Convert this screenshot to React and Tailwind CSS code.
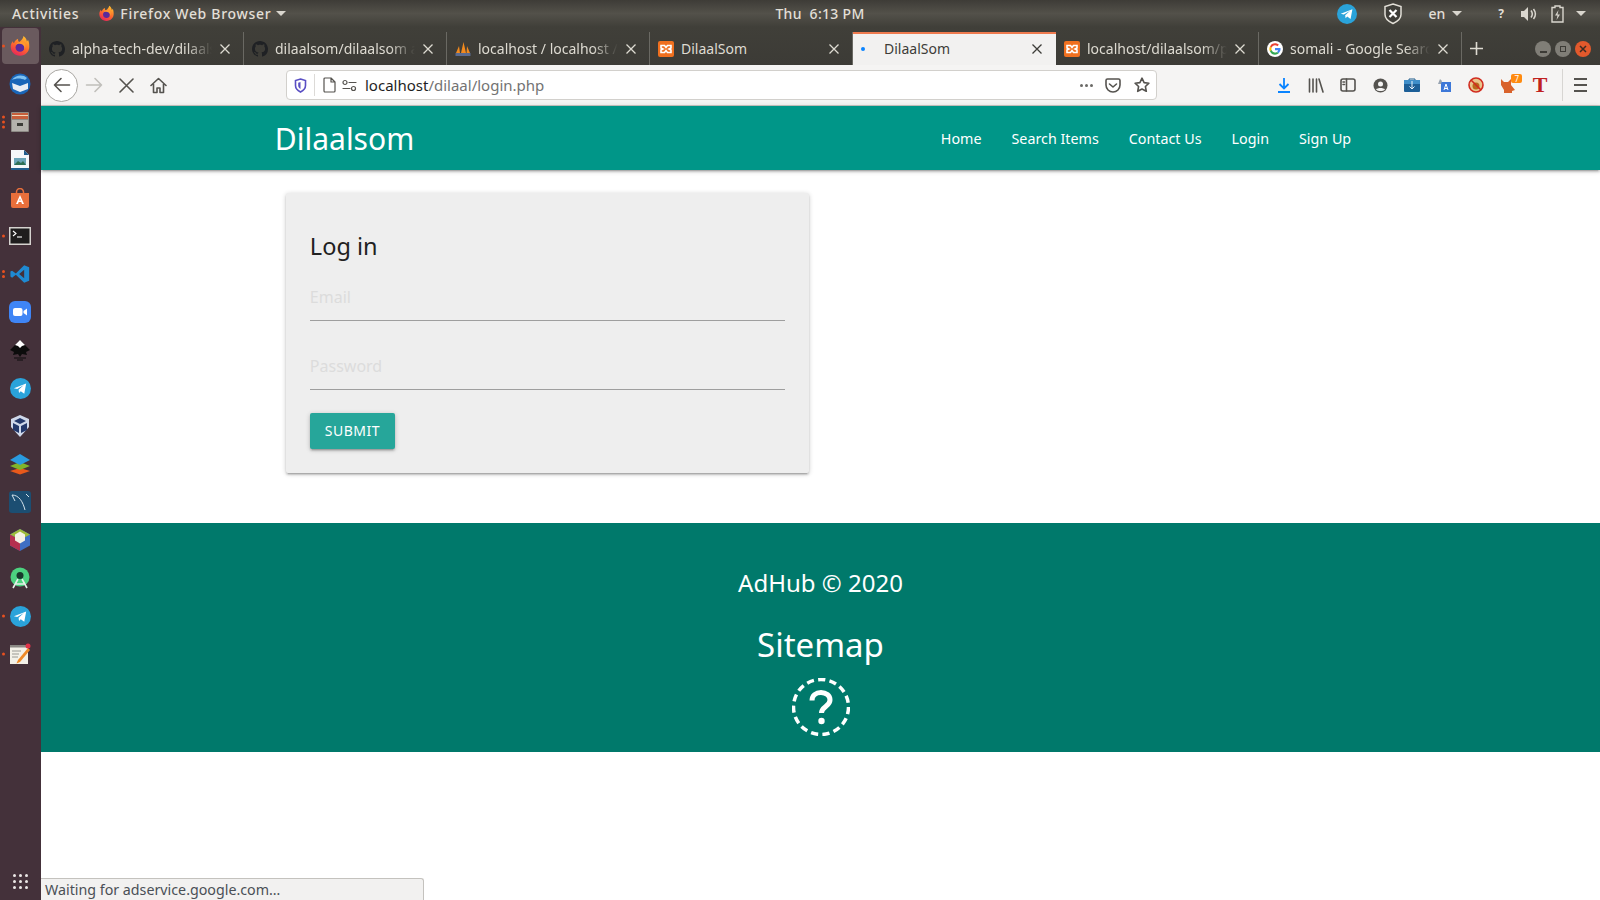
import React from "react";

const UI = { fontFamily: '"Noto Sans", "Open Sans", sans-serif' };

function Firefox({ s = 16 }) {
  return (
    <svg width={s} height={s} viewBox="0 0 32 32">
      <defs>
        <linearGradient id="ffg" x1="0.7" y1="0" x2="0.2" y2="1">
          <stop offset="0" stopColor="#ffbd2e" />
          <stop offset="0.5" stopColor="#ff6a2b" />
          <stop offset="1" stopColor="#e3205f" />
        </linearGradient>
      </defs>
      <path d="M16 30C8 30 2.500 24 2.500 17c0-3 1-6 3-8 .2 1.500.8 2.500 1.800 3 .8-3 3-5.500 6-6.500-.5 2 0 3.500 1.500 4.500C19 7 20.500 5 21 1.500c4 2.500 5 6 4.800 8 1-.5 1.500-1.300 1.800-2.500C29 9.500 29.500 13 29.500 17 29.500 24 24 30 16 30z" fill="url(#ffg)" />
      <circle cx="16" cy="18" r="6.500" fill="#5b2a9b" />
      <path d="M9 15c3-3 8-3 11-1 2 1.500 3 4 2 7 2-2 3-6 1-9-3-3-10-3-14 3z" fill="#ff9a2e" />
    </svg>
  );
}

function Telegram({ s = 20 }) {
  return (
    <svg width={s} height={s} viewBox="0 0 24 24">
      <circle cx="12" cy="12" r="12" fill="#2aa3da" />
      <path d="M4.500 11.800 18.500 6.300 16.300 18l-4-3-2 2-.5-3.600 6-5.400-7.600 4.700z" fill="#fff" />
    </svg>
  );
}

function Xampp({ s = 16 }) {
  return (
    <svg width={s} height={s} viewBox="0 0 16 16">
      <rect width="16" height="16" rx="2" fill="#f0701f" />
      <path d="M3 4.500h3.500L8 6.500l1.500-2H13v2.500l-2 1 2 1v2.500H9.500L8 9.500l-1.500 2H3V9l2-1-2-1z" fill="none" stroke="#fff" strokeWidth="1.600" />
    </svg>
  );
}

function Github() {
  return (
    <svg width="16" height="16" viewBox="0 0 16 16" fill="#1f2124">
      <path d="M8 0C3.580 0 0 3.580 0 8c0 3.540 2.290 6.530 5.470 7.590.4.070.55-.17.55-.38 0-.19-.01-.82-.01-1.490-2.010.37-2.530-.49-2.690-.94-.09-.23-.48-.94-.82-1.130-.28-.15-.68-.52-.01-.53.630-.01 1.080.58 1.230.82.720 1.210 1.870.87 2.330.66.070-.52.280-.87.510-1.070-1.780-.2-3.640-.89-3.640-3.950 0-.87.310-1.590.820-2.150-.08-.2-.36-1.020.08-2.120 0 0 .67-.21 2.200.82.640-.18 1.320-.27 2-.27s1.360.09 2 .27c1.530-1.040 2.200-.82 2.200-.82.440 1.100.160 1.920.080 2.120.51.560.82 1.270.82 2.150 0 3.070-1.870 3.750-3.650 3.950.29.250.54.730.54 1.480 0 1.070-.01 1.930-.01 2.200 0 .21.150.46.550.38A8.010 8.010 0 0 0 16 8c0-4.420-3.580-8-8-8z" />
    </svg>
  );
}

function Pma() {
  return (
    <svg width="16" height="16" viewBox="0 0 16 16">
      <path d="M1 12 4 5l1 7zM6 12 8.500 1 11 12zM11.500 12 12 5l3 7z" fill="#f28a1e" />
      <rect x="0.500" y="12" width="15" height="3" fill="#5b6b8f" />
    </svg>
  );
}

function GoogleG() {
  return (
    <svg width="16" height="16" viewBox="0 0 48 48">
      <circle cx="24" cy="24" r="24" fill="#fff" />
      <path fill="#ea4335" d="M24 13c3 0 5.300 1 7.100 2.700l4.300-4.300C32.500 8.800 28.700 7 24 7c-6.600 0-12.300 3.800-15.100 9.300l5 3.900C15.200 16.100 19.200 13 24 13z" />
      <path fill="#4285f4" d="M40.600 24.400c0-1.200-.1-2.100-.3-3.100H24v6.200h9.400c-.4 2.200-1.700 4-3.600 5.300l4.800 3.700c2.900-2.600 6-6.800 6-12.100z" />
      <path fill="#fbbc05" d="M13.900 27.800c-.4-1.200-.6-2.500-.6-3.800s.2-2.600.6-3.800l-5-3.900C7.700 18.600 7 21.200 7 24s.7 5.400 1.900 7.700z" />
      <path fill="#34a853" d="M24 41c4.600 0 8.400-1.500 11.200-4.100l-5.400-4.100c-1.500 1-3.400 1.700-5.800 1.700-4.800 0-8.800-3.100-10.100-7.400l-5 3.900C11.700 37.200 17.400 41 24 41z" />
    </svg>
  );
}

function Tab({ icon, title, active, fade }) {
  return (
    <div
      className={
        active
          ? "flex h-[33px] w-[203px] shrink-0 items-center gap-[13px] border-t-2 border-[#ee7a4f] bg-[#f2f1f0] pb-[2px] pl-[2px] pr-[13px] text-[#3d3c38]"
          : "flex h-[33px] w-[203px] shrink-0 items-center gap-[7px] border-r border-[#6a6963] pl-[8px] pr-[12px] text-[#dedbd2]"
      }
    >
      <span className="flex w-[16px] shrink-0 justify-center">{icon}</span>
      <span
        className={
          fade
            ? "flex-1 overflow-hidden whitespace-nowrap text-[14px] leading-[20px] [mask-image:linear-gradient(to_right,black_82%,transparent)]"
            : "flex-1 overflow-hidden whitespace-nowrap text-[14px] leading-[20px]"
        }
      >
        {title}
      </span>
      <svg width="12" height="12" viewBox="0 0 12 12" className="shrink-0" stroke="currentColor" strokeWidth="1.300">
        <path d="M1.500 1.500l9 9M10.500 1.500l-9 9" />
      </svg>
    </div>
  );
}

const strokeIcon = {
  fill: "none",
  stroke: "#55534f",
  strokeWidth: 1.600,
  strokeLinecap: "round",
  strokeLinejoin: "round",
};

function ToolSlot({ children, w = "w-[32px]" }) {
  return <div className={"flex h-[24px] shrink-0 items-center justify-center " + w}>{children}</div>;
}

function DockItem({ dots = 0, active, children }) {
  return (
    <div className="relative flex h-[38px] w-full shrink-0 items-center justify-center pr-[1px]">
      {active && <div className="absolute inset-x-[2px] inset-y-[1px] rounded bg-[#6a5a5e]" />}
      {dots > 0 && (
        <div className="absolute left-[2px] top-1/2 flex -translate-y-1/2 flex-col gap-[2px]">
          {Array.from({ length: dots }).map((_, i) => (
            <span key={i} className="h-[3px] w-[3px] rounded-full bg-[#e8501f]" />
          ))}
        </div>
      )}
      <span className="relative flex">{children}</span>
    </div>
  );
}

function Dock() {
  return (
    <aside className="flex w-[41px] shrink-0 flex-col items-center bg-[#44313a]">
      <DockItem active dots={1}><Firefox s={22} /></DockItem>
      <DockItem>
        <svg width="22" height="22" viewBox="0 0 22 22">
          <circle cx="11" cy="11" r="10.500" fill="#1a66b8" />
          <path d="M3 7c3-5 11-6 15-2l-2 2C12 5 7 5 3 7z" fill="#7fc1f0" />
          <path d="M3 10l8 3 8-3v6l-8 3-7-3z" fill="#e9eef4" />
        </svg>
      </DockItem>
      <DockItem dots={3}>
        <svg width="18" height="20" viewBox="0 0 18 20">
          <rect width="18" height="20" rx="1" fill="#8d8a85" />
          <rect x="1" y="1" width="16" height="6" fill="#c65f3c" />
          <rect x="1" y="3" width="16" height="1" fill="#f0d5b8" />
          <rect x="1" y="8" width="16" height="11" fill="#b5b2ad" />
          <rect x="6" y="11" width="6" height="3" fill="#3d3c38" />
        </svg>
      </DockItem>
      <DockItem>
        <svg width="18" height="20" viewBox="0 0 18 20">
          <path d="M0 0h13l5 5v15H0z" fill="#f4f7fa" />
          <path d="M13 0l5 5h-5z" fill="#1f5c8d" />
          <rect x="3" y="8" width="12" height="7" fill="#6aa4b8" />
          <path d="M3 15l4-4 3 2 2-2 3 4z" fill="#2e6f55" />
          <rect y="18" width="18" height="2" fill="#1f5c8d" />
        </svg>
      </DockItem>
      <DockItem>
        <svg width="18" height="20" viewBox="0 0 18 20">
          <path d="M5.500 6V4a3.500 3.500 0 0 1 7 0v2" fill="none" stroke="#e86f3b" strokeWidth="1.500" />
          <path d="M0 5h18v13a2 2 0 0 1-2 2H2a2 2 0 0 1-2-2z" fill="#e86f3b" />
          <path d="M9 7l4 9h-2l-.7-2H7.700L7 16H5zM8.300 12.500h1.400L9 10.500z" fill="#fff" />
        </svg>
      </DockItem>
      <DockItem dots={1}>
        <svg width="22" height="18" viewBox="0 0 22 18">
          <rect width="22" height="18" fill="#d5d3cf" />
          <rect x="1.500" y="1.500" width="19" height="15" fill="#1e1d1d" />
          <path d="M4 4l3 2.500L4 9" stroke="#fff" strokeWidth="1.100" fill="none" />
          <path d="M8 10h5" stroke="#fff" strokeWidth="1.100" />
        </svg>
      </DockItem>
      <DockItem dots={2}>
        <svg width="20" height="20" viewBox="0 0 24 24">
          <path d="M17 1.500 23 4v16l-6 2.500-10-9.500-4.500 3.500L.5 15V9l2-1L7 11.500zM17 7l-6 5 6 5z" fill="#1f8ad2" />
        </svg>
      </DockItem>
      <DockItem>
        <svg width="22" height="22" viewBox="0 0 22 22">
          <rect width="22" height="22" rx="6" fill="#3f85f5" />
          <rect x="4" y="7" width="9.500" height="8" rx="2" fill="#fff" />
          <path d="M14.500 10l3.500-2.500v7L14.500 12z" fill="#fff" />
        </svg>
      </DockItem>
      <DockItem>
        <svg width="22" height="22" viewBox="0 0 22 22">
          <path d="M11 1l10 10-4 2 1 3-5-1-2 3-2-3-5 1 1-3-4-2z" fill="#0c0c0c" />
          <path d="M11 1l5 5-3 1-2 2-2-2-3-1z" fill="#fff" />
          <path d="M5 19h12M8 21h6" stroke="#0c0c0c" strokeWidth="1.200" />
        </svg>
      </DockItem>
      <DockItem><Telegram s={21} /></DockItem>
      <DockItem>
        <svg width="20" height="22" viewBox="0 0 20 22">
          <path d="M10 0l9 4v8l-9 10-9-10V4z" fill="#cfd8ea" />
          <path d="M10 3l6 3-6 3-6-3zM3 8l6 3v7l-6-3zM17 8l-6 3v7l6-3z" fill="#23386b" />
        </svg>
      </DockItem>
      <DockItem>
        <svg width="22" height="22" viewBox="0 0 22 22">
          <path d="M11 15l10 3-10 3.500L1 18z" fill="#e8591b" />
          <path d="M11 9l10 4-10 4-10-4z" fill="#7fb52b" />
          <path d="M11 1l10 6-10 5L1 7z" fill="#2a9be0" />
        </svg>
      </DockItem>
      <DockItem>
        <svg width="22" height="22" viewBox="0 0 22 22">
          <rect width="22" height="22" rx="3" fill="#1c4e72" />
          <path d="M3 4c7 0 11 7 13 15M3 4l3 6M17 3l3 3" stroke="#d5e3ec" strokeWidth="1" fill="none" />
        </svg>
      </DockItem>
      <DockItem>
        <svg width="20" height="22" viewBox="0 0 20 22">
          <path d="M10 0l10 5.500v11L10 22 0 16.500v-11z" fill="#3f6fc4" />
          <path d="M10 0l10 5.500L10 11 0 5.500z" fill="#9cbb3a" />
          <path d="M0 5.500 10 11v11L0 16.500z" fill="#b5304f" />
          <path d="M5 5.500l5-3 5 3v6l-5 3-5-3z" fill="#f4f1e4" />
        </svg>
      </DockItem>
      <DockItem>
        <svg width="22" height="22" viewBox="0 0 22 22">
          <circle cx="11" cy="10" r="9.500" fill="#4cd27f" />
          <circle cx="11" cy="8.500" r="3.500" fill="#183a2c" />
          <path d="M4 21l5-9M18 21l-5-9M6 17h10" stroke="#e6efe9" strokeWidth="1.600" fill="none" />
        </svg>
      </DockItem>
      <DockItem dots={1}><Telegram s={21} /></DockItem>
      <DockItem dots={1}>
        <svg width="22" height="22" viewBox="0 0 22 22">
          <rect x="1" y="2" width="18" height="19" fill="#f3f1e8" />
          <path d="M1 2h18v2.500H1z" fill="#8b8984" />
          <path d="M3 8h9M3 11h7M3 14h6" stroke="#9a9a94" />
          <path d="M19 5 9 17l-1.500 3.500L11 19 21 7z" fill="#ef8a26" />
          <circle cx="19" cy="3" r="2.500" fill="#e0344a" />
        </svg>
      </DockItem>
      <div className="flex-1" />
      <div className="mb-[11px] mr-[1px] grid grid-cols-3 gap-[3px]">
        {Array.from({ length: 9 }).map((_, i) => (
          <span key={i} className="h-[3px] w-[3px] rounded-full bg-[#ece8e6]" />
        ))}
      </div>
    </aside>
  );
}

function TopBar() {
  return (
    <header className="grid h-[27px] shrink-0 grid-cols-[1fr_auto_1fr] items-center bg-gradient-to-b from-[#3e3c37] via-[#53514a] to-[#403f39] text-[14px] text-[#e2dfd7]">
      <div className="flex items-center">
        <span className="ml-[12px] font-medium tracking-[0.7px]">Activities</span>
        <span className="ml-[19px] flex"><Firefox s={17} /></span>
        <span className="ml-[5px] font-medium tracking-[0.7px]">Firefox Web Browser</span>
        <span className="ml-[5px] h-0 w-0 border-x-[5px] border-t-[5px] border-x-transparent border-t-[#d9d6ce]" />
      </div>
      <div className="ml-[40px] font-medium tracking-[0.3px]">Thu&nbsp; 6:13 PM</div>
      <div className="flex items-center justify-end">
        <Telegram s={20} />
        <svg width="20" height="22" viewBox="0 0 20 22" className="ml-[26px]">
          <path d="M10 1l8 2.500v8c0 4-3.500 7-8 9-4.500-2-8-5-8-9v-8z" fill="#3f3e39" stroke="#e2dfd7" strokeWidth="1.500" />
          <path d="M6.500 7l7 7M13.500 7l-7 7" stroke="#fff" strokeWidth="2.200" />
        </svg>
        <span className="ml-[25px] font-medium">en</span>
        <span className="ml-[7px] h-0 w-0 border-x-[5px] border-t-[5px] border-x-transparent border-t-[#d9d6ce]" />
        <span className="ml-[36px] text-[12px] font-bold">?</span>
        <svg width="18" height="16" viewBox="0 0 18 16" className="ml-[16px]">
          <path d="M1 5h3l4-4v14l-4-4H1z" fill="#d9d6ce" />
          <path d="M11 4.500c1.500 2 1.500 5 0 7M13.500 3c2.300 3 2.300 7 0 10" stroke="#d9d6ce" strokeWidth="1.500" fill="none" />
        </svg>
        <svg width="13" height="18" viewBox="0 0 13 18" className="ml-[13px]">
          <path d="M4 1h5v1.500h3V17H1V2.500h3z" fill="none" stroke="#d9d6ce" strokeWidth="1.400" />
          <path d="M7.500 5L4 10.500h2.500L5.500 15 9 9.500H6.500z" fill="#d9d6ce" />
        </svg>
        <span className="ml-[12px] mr-[14px] h-0 w-0 border-x-[5px] border-t-[5px] border-x-transparent border-t-[#d9d6ce]" />
      </div>
    </header>
  );
}

function TabBar() {
  return (
    <div className="flex h-[38px] shrink-0 items-end bg-gradient-to-b from-[#403f39] to-[#3c3b36]">
      <Tab icon={<Github />} title="alpha-tech-dev/dilaalsom" fade />
      <Tab icon={<Github />} title="dilaalsom/dilaalsom at master" fade />
      <Tab icon={<Pma />} title="localhost / localhost / dilaal" fade />
      <Tab icon={<Xampp />} title="DilaalSom" />
      <Tab active icon={<span className="h-[4px] w-[4px] rounded-full bg-[#0a84ff]" />} title="DilaalSom" />
      <Tab icon={<Xampp />} title="localhost/dilaalsom/phpmy" fade />
      <Tab icon={<GoogleG />} title="somali - Google Search" fade />
      <div className="flex h-[33px] w-[29px] shrink-0 items-center justify-center text-[#dedbd2]">
        <svg width="15" height="15" viewBox="0 0 15 15" stroke="currentColor" strokeWidth="1.600"><path d="M7.500 1v13M1 7.500h13" /></svg>
      </div>
      <div className="flex h-[33px] flex-1 items-center justify-end gap-[4px] pr-[9px]">
        <span className="flex h-[16px] w-[16px] items-center justify-center rounded-full bg-[#807e77]"><span className="mt-[6px] h-[2px] w-[7px] bg-[#3c3b36]" /></span>
        <span className="flex h-[16px] w-[16px] items-center justify-center rounded-full bg-[#807e77]"><span className="h-[6px] w-[6px] border border-[#3c3b36]" /></span>
        <span className="flex h-[16px] w-[16px] items-center justify-center rounded-full bg-[#e2592c]">
          <svg width="8" height="8" viewBox="0 0 8 8" stroke="#3c2b22" strokeWidth="1.500"><path d="M1 1l6 6M7 1L1 7" /></svg>
        </span>
      </div>
    </div>
  );
}

function Toolbar() {
  return (
    <div className="flex h-[41px] shrink-0 items-center border-b border-[#c9c7c3] bg-[#f5f4f3]">
      <div className="ml-[4px] flex h-[33px] w-[33px] shrink-0 items-center justify-center rounded-full border border-[#a9a7a3] bg-white">
        <svg width="18" height="16" viewBox="0 0 18 16" {...strokeIcon}><path d="M16.500 8H1.500M8 1.500 1.500 8 8 14.500" /></svg>
      </div>
      <ToolSlot>
        <svg width="18" height="16" viewBox="0 0 18 16" {...strokeIcon} stroke="#c0bfbb"><path d="M1.500 8h15M10 1.500 16.500 8 10 14.500" /></svg>
      </ToolSlot>
      <ToolSlot>
        <svg width="15" height="15" viewBox="0 0 15 15" {...strokeIcon}><path d="M1 1l13 13M14 1 1 14" /></svg>
      </ToolSlot>
      <ToolSlot>
        <svg width="17" height="17" viewBox="0 0 17 17" {...strokeIcon}><path d="M1 8.500 8.500 1.500 16 8.500M3.500 7v8.500h3.500V11h3v4.500h3.500V7" /></svg>
      </ToolSlot>
      <div className="ml-[112px] flex h-[30px] w-[871px] shrink-0 items-center rounded-[4px] border border-[#d2d0cc] bg-white">
        <div className="flex h-[22px] w-[28px] shrink-0 items-center justify-center border-r border-[#dcdad7]">
          <svg width="13" height="15" viewBox="0 0 13 15"><path d="M6.500 1l5 1.500v5c0 3-2 5-5 6.500-3-1.500-5-3.500-5-6.500v-5z" fill="none" stroke="#5a4fc4" strokeWidth="1.600" /><path d="M6.500 4v7c-1.500-1-2.300-2-2.300-3.500V4.700z" fill="#5a4fc4" /></svg>
        </div>
        <svg width="13" height="16" viewBox="0 0 13 16" className="ml-[8px] shrink-0" {...strokeIcon} strokeWidth="1.200"><path d="M1 2a1 1 0 0 1 1-1h6l4 4v9a1 1 0 0 1-1 1H2a1 1 0 0 1-1-1zM8 1v4h4" /></svg>
        <svg width="15" height="13" viewBox="0 0 15 13" className="ml-[6px] shrink-0" {...strokeIcon} strokeWidth="1.200"><circle cx="3" cy="3.500" r="2" /><path d="M7 3.500h7M1 9.500h7" /><circle cx="11.500" cy="9.500" r="2" /></svg>
        <div className="ml-[8px] flex-1 whitespace-nowrap text-[15px] leading-[20px] text-[#737373]">
          <span className="text-[#1f1f1f]">localhost</span>/dilaal/login.php
        </div>
        <div className="mr-[12px] flex gap-[2px]">
          <span className="h-[3px] w-[3px] rounded-full bg-[#6b6a67]" />
          <span className="h-[3px] w-[3px] rounded-full bg-[#6b6a67]" />
          <span className="h-[3px] w-[3px] rounded-full bg-[#6b6a67]" />
        </div>
        <svg width="16" height="15" viewBox="0 0 16 15" className="mr-[13px]" {...strokeIcon}><path d="M1 2.500A1.500 1.500 0 0 1 2.500 1h11A1.500 1.500 0 0 1 15 2.500V7a7 7 0 0 1-14 0zM4.500 6 8 9l3.500-3" /></svg>
        <svg width="16" height="16" viewBox="0 0 16 16" className="mr-[6px]" {...strokeIcon}><path d="M8 1.200l2.100 4.400 4.800.6-3.500 3.300.9 4.800L8 12l-4.300 2.300.9-4.800L1.100 6.200l4.800-.6z" /></svg>
      </div>
      <div className="ml-[111px] flex flex-1 items-center">
        <ToolSlot>
          <svg width="16" height="16" viewBox="0 0 16 16" fill="none" stroke="#0a84ff" strokeWidth="1.800"><path d="M8 1v10M3.500 7 8 11.500 12.500 7M2 15h12" /></svg>
        </ToolSlot>
        <ToolSlot>
          <svg width="16" height="15" viewBox="0 0 16 15" {...strokeIcon}><path d="M1.500 1v13M5 1v13M8.500 1v13M11 1l4 13" /></svg>
        </ToolSlot>
        <ToolSlot>
          <svg width="16" height="14" viewBox="0 0 16 14" {...strokeIcon}><rect x="1" y="1" width="14" height="12" rx="2" /><path d="M6.500 1v12M3 4h1.500M3 6.500h1.500" /></svg>
        </ToolSlot>
        <ToolSlot>
          <svg width="15" height="15" viewBox="0 0 15 15"><circle cx="7.500" cy="7.500" r="7" fill="#55534f" /><circle cx="7.500" cy="6" r="2.500" fill="#f5f4f3" /><path d="M3 11.500c1.500-2 7.500-2 9 0-2 2-7 2-9 0z" fill="#f5f4f3" /></svg>
        </ToolSlot>
        <ToolSlot>
          <svg width="16" height="14" viewBox="0 0 16 14"><path d="M5 2V1h6v1" fill="none" stroke="#1e5c8d" /><rect y="2" width="16" height="12" rx="1" fill="#1d5f97" /><rect y="2" width="16" height="4" fill="#3f8ec9" /><path d="M8 3v8M5.500 8.500 8 11l2.500-2.500" stroke="#e8f2f9" fill="none" /></svg>
        </ToolSlot>
        <ToolSlot>
          <svg width="14" height="14" viewBox="0 0 14 14"><rect x="4" y="4" width="10" height="10" fill="#3d78d8" /><path d="M9 6l-2 6M9 6l2 6M7.500 10.500h3" stroke="#fff" fill="none" /><path d="M3 1l2 2-1 3H1z" fill="#97a3b0" /></svg>
        </ToolSlot>
        <ToolSlot>
          <svg width="16" height="16" viewBox="0 0 16 16"><circle cx="8" cy="8" r="7" fill="#e9c58c" stroke="#d12b1f" strokeWidth="1.600" /><circle cx="8" cy="9" r="3.500" fill="#b8691c" /><path d="M3 3l10 10" stroke="#d12b1f" strokeWidth="1.600" /></svg>
        </ToolSlot>
        <ToolSlot>
          <span className="relative flex">
            <svg width="16" height="15" viewBox="0 0 16 15"><path d="M1 1l3 3h4l3-3v6l4 5-3 1v2H4v-3L1 7z" fill="#d9622b" /></svg>
            <span className="absolute -right-[6px] -top-[4px] rounded-[2px] bg-[#ff8a0f] px-[3px] text-[8px] leading-[9px] text-white">7</span>
          </span>
        </ToolSlot>
        <ToolSlot>
          <span className="text-[22px] font-bold leading-[24px] text-[#c0211e] [font-family:'Liberation_Serif',serif]">T</span>
        </ToolSlot>
        <div className="ml-[6px] h-[32px] w-px bg-[#d7d5d2]" />
        <div className="ml-[11px] flex flex-col gap-[4px]">
          <span className="h-[2px] w-[13px] bg-[#55534f]" />
          <span className="h-[2px] w-[13px] bg-[#55534f]" />
          <span className="h-[2px] w-[13px] bg-[#55534f]" />
        </div>
      </div>
    </div>
  );
}

function Field({ placeholder, type }) {
  return (
    <input
      type={type}
      placeholder={placeholder}
      readOnly
      className="mb-[23px] block h-[46px] w-full border-b border-[#9e9e9e] bg-transparent pb-[2px] text-[16px] outline-none placeholder:text-[#dcdcdc]"
    />
  );
}

function Page() {
  return (
    <div className="relative min-w-0 flex-1 bg-white">
      <nav className="relative z-10 h-[64px] bg-[#009688] shadow-[0_2px_2px_0_rgba(0,0,0,0.14),0_3px_1px_-2px_rgba(0,0,0,0.12),0_1px_5px_0_rgba(0,0,0,0.2)]">
        <div className="mx-auto flex h-full w-[70%] items-center justify-between text-white">
          <a className="pt-[1px] text-[30px] leading-[66px]">Dilaalsom</a>
          <ul className="flex pt-[1px] text-[14.300px]">
            {["Home", "Search Items", "Contact Us", "Login", "Sign Up"].map((t) => (
              <li key={t} className="px-[15px] leading-[64px]">{t}</li>
            ))}
          </ul>
        </div>
      </nav>
      <div className="mx-auto w-[70%] pt-[23px]">
        <div className="ml-[11px] h-[280px] w-[523px] rounded-[2px] bg-[#eeeeee] px-[24px] pt-[37px] shadow-[0_2px_2px_0_rgba(0,0,0,0.14),0_3px_1px_-2px_rgba(0,0,0,0.12),0_1px_5px_0_rgba(0,0,0,0.2)]">
          <h2 className="text-[23.500px] leading-[32px] text-[#212121]">Log in</h2>
          <form className="mt-[13px]">
            <Field placeholder="Email" type="email" />
            <Field placeholder="Password" type="password" />
            <button type="button" className="h-[36px] w-[85px] rounded-[2px] bg-[#26a69a] pb-[2px] text-[14px] tracking-[0.5px] text-white shadow-[0_2px_2px_0_rgba(0,0,0,0.14),0_3px_1px_-2px_rgba(0,0,0,0.12),0_1px_5px_0_rgba(0,0,0,0.2)]">SUBMIT</button>
          </form>
        </div>
      </div>
      <footer className="mt-[50px] flex h-[229px] flex-col items-center bg-[#00796b] text-white">
        <p className="mt-[43px] text-[24px] leading-[33px]">AdHub © 2020</p>
        <h3 className="mt-[23px] text-[33px] leading-[46px]">Sitemap</h3>
        <svg width="58" height="58" viewBox="0 0 58 58" fill="none" stroke="#fff" className="mt-[10px]">
          <circle cx="29" cy="29" r="27.500" strokeWidth="3.500" strokeDasharray="7.200 4.300" />
          <path d="M20 22.500c0-5 4-8 9-8s9 3 9 7.500c0 6.500-8.500 6.500-8.500 13" strokeWidth="5" />
          <circle cx="29.500" cy="43" r="3.200" fill="#fff" stroke="none" />
        </svg>
      </footer>
      <div className="absolute bottom-0 left-0 flex h-[22px] w-[383px] items-center rounded-tr-[3px] border-r border-t border-[#c4c2be] bg-[#f2f1f0] pl-[4px] text-[14.250px] text-[#4a4f56]">
        Waiting for adservice.google.com…
      </div>
    </div>
  );
}

export default function App() {
  return (
    <div className="flex h-[900px] w-[1600px] flex-col overflow-hidden" style={UI}>
      <TopBar />
      <div className="flex min-h-0 flex-1">
        <Dock />
        <div className="flex min-w-0 flex-1 flex-col">
          <TabBar />
          <Toolbar />
          <Page />
        </div>
      </div>
    </div>
  );
}
